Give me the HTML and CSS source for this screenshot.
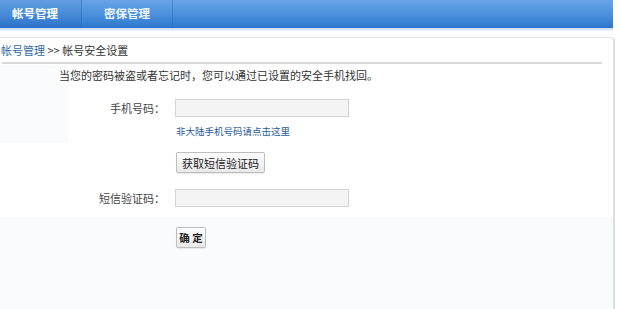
FILE: index.html
```html
<!DOCTYPE html>
<html lang="zh-CN">
<head>
    <meta charset="UTF-8">
    <title>帐号安全设置</title>
    <link rel="stylesheet" href="styles.css">
</head>
<body>
    <div class="tabs">
        <a class="tab active" href="#">帐号管理</a>
        <a class="tab" href="#">密保管理</a>
    </div>
    <div class="tabs-shadow"></div>

    <div class="panel">
        <div class="crumb"><a href="#">帐号管理</a> &gt;&gt; 帐号安全设置</div>
        <div class="crumb-line"></div>

        <div class="side"></div>
        <p class="intro">当您的密码被盗或者忘记时，您可以通过已设置的安全手机找回。</p>

        <div class="row first">
            <label class="label">手机号码：</label>
            <div class="field"><input type="text" class="input"></div>
        </div>
        <div class="row">
            <div class="label"></div>
            <div class="field"><a class="hint" href="#">非大陆手机号码请点击这里</a></div>
        </div>
        <div class="row send">
            <div class="label"></div>
            <div class="field"><button class="btn">获取短信验证码</button></div>
        </div>
        <div class="row code">
            <label class="label">短信验证码：</label>
            <div class="field"><input type="text" class="input"></div>
        </div>

        <div class="footer">
            <div class="row">
                <div class="label"></div>
                <div class="field"><button class="btn ok">确 定</button></div>
            </div>
        </div>
    </div>
</body>
</html>
```

FILE: styles.css
```css
* {
    margin: 0;
    padding: 0;
    box-sizing: border-box;
}

body {
    font-family: "Noto Sans CJK SC", "Liberation Sans", sans-serif;
    font-size: 11px;
    color: #333;
    background: #fff;
    width: 620px;
    height: 309px;
    overflow: hidden;
}

.tabs {
    display: flex;
    width: 613px;
    height: 28px;
    background: linear-gradient(#66a5e6, #4a8fdb 55%, #2b76cd);
}

.tab {
    display: block;
    height: 28px;
    line-height: 26px;
    color: #fff;
    font-weight: bold;
    font-size: 11.5px;
    text-decoration: none;
    border-right: 1px solid rgba(40, 100, 180, 0.45);
}

.tab.active {
    width: 82px;
    padding-left: 12px;
    background: rgba(30, 80, 160, 0.08);
}

.tab:not(.active) {
    width: 91px;
    padding-left: 22px;
    color: #eef5fd;
}

.tabs-shadow {
    width: 613px;
    height: 3px;
    background: linear-gradient(#c4daf2, #eef4fb);
}

.panel {
    width: 615px;
    height: 278px;
    margin-top: 6px;
    border-top: 1px solid #e3e3e3;
    border-right: 2px solid #dedede;
    border-top-right-radius: 4px;
    display: flex;
    flex-direction: column;
}

.crumb {
    height: 24px;
    line-height: 24px;
    padding-left: 1px;
    color: #333;
}

.crumb a {
    color: #2f6aa3;
    text-decoration: none;
}

.crumb-line {
    height: 2px;
    margin: 0 11px 0 2px;
    background: #dadada;
}

.side {
    position: relative;
}

.side::before {
    content: '';
    position: absolute;
    left: 0;
    top: 1px;
    width: 68px;
    height: 78px;
    background: #fafbfc;
}

.intro {
    position: relative;
    padding-left: 59px;
    line-height: 22px;
}

.row {
    position: relative;
    display: flex;
    align-items: center;
}

.row.first {
    margin-top: 13px;
}

.label {
    width: 165px;
    text-align: right;
    color: #444;
}

.field {
    margin-left: 10px;
}

.input {
    display: block;
    width: 174px;
    height: 18px;
    border: 1px solid #d3d3d3;
    background: #f4f4f4;
}

.hint {
    display: block;
    margin-top: 6px;
    line-height: 16px;
    font-size: 9.5px;
    color: #1f5c9a;
    text-decoration: none;
    padding-left: 1px;
}

.row.send {
    margin-top: 13px;
}

.btn {
    display: block;
    height: 21px;
    padding: 0 5px;
    font-family: inherit;
    font-size: 11px;
    color: #222;
    background: linear-gradient(#fdfdfd, #e9e9e9);
    border: 1px solid #bdbdbd;
    border-radius: 2px;
    box-shadow: 0 1px 1px rgba(0, 0, 0, 0.08);
    margin-left: 1px;
}

.row.code {
    margin-top: 16px;
}

.footer {
    flex: 1;
    margin-top: 10px;
    padding-top: 10px;
    background: #f9fbfd;
}

.btn.ok {
    width: 30px;
    padding: 0;
    text-align: center;
    white-space: nowrap;
    font-weight: bold;
    font-size: 10.5px;
}
```
